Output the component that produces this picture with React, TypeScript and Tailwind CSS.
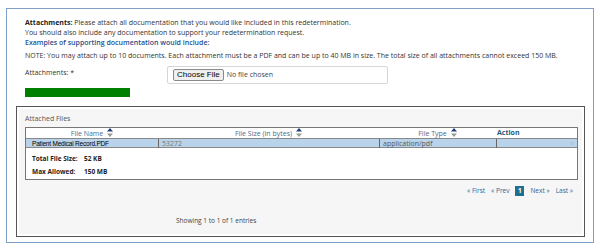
import React from 'react';

function SortIcon() {
  return (
    <svg width="6" height="9" viewBox="0 0 6 9" className="inline-block ml-[4px] align-[-1px]">
      <path d="M3 0 L6 3.5 L0 3.5 Z" fill="#1f3f7a" />
      <path d="M0 5.5 L6 5.5 L3 9 Z" fill="#9a9a9a" />
    </svg>
  );
}

export default function App() {
  return (
    <div className="w-[600px] h-[250px] bg-white pt-[8px] pl-[6px] font-['Open_Sans',sans-serif] text-[7px] text-[#333]">
      <div className="w-[588px] h-[235px] border border-[#7e9fc6] pt-[9px]">
        {/* Instructions */}
        <div className="pl-[18px] leading-[10px]">
          <div>
            <span className="font-bold text-[#222]">Attachments:</span> Please attach all documentation that you would like included in this redetermination.
          </div>
          <div>You should also include any documentation to support your redetermination request.</div>
          <div className="font-semibold text-[#1f4e8c]">Examples of supporting documentation would include:</div>
          <div className="mt-[3px]">
            NOTE: You may attach up to 10 documents. Each attachment must be a PDF and can be up to 40 MB in size. The total size of all attachments cannot exceed 150 MB.
          </div>
        </div>

        {/* File chooser */}
        <div className="pl-[18px] mt-[5px] flex items-start">
          <div className="w-[142px] pt-[2px] leading-[10px]">Attachments: *</div>
          <div className="w-[221px] h-[18px] border border-[#d6d6d6] rounded-[2px] flex items-center pl-[5px] gap-[3px]">
            <span className="h-[12px] px-[3px] border border-[#8a8a8a] rounded-[2px] bg-[#efefef] text-[8px] leading-[10px] text-black font-['Liberation_Sans',sans-serif]">
              Choose File
            </span>
            <span className="text-[7px] text-[#444]">No file chosen</span>
          </div>
        </div>

        {/* Progress bar */}
        <div className="ml-[18px] mt-[4px] w-[105px] h-[9px] bg-[#008000]" />

        {/* Attached files panel */}
        <div className="ml-[9px] mt-[9px] w-[569px] h-[131px] border border-[#555] p-[2px]">
          <div className="bg-[#f6f6f6] h-full px-[6px] pt-[5px]">
            <div className="text-[#555] leading-[10px]">Attached Files</div>
            <div className="mt-[3px] w-[553px] border border-[#777] bg-white">
              <div className="grid grid-cols-[132px_221px_117px_1fr] h-[10px] leading-[10px] text-[#4a6c92]">
                <div className="text-center">
                  File Name<SortIcon />
                </div>
                <div className="text-center">
                  File Size (in bytes)<SortIcon />
                </div>
                <div className="text-center">
                  File Type<SortIcon />
                </div>
                <div className="pl-[1px] font-bold text-[#1f5a78]">Action</div>
              </div>
              <div className="grid grid-cols-[132px_221px_117px_1fr] h-[9px] leading-[9px] bg-[#b9d3ea] border-t border-[#888]">
                <div className="pl-[6px] text-black font-['Liberation_Sans',sans-serif] text-[6.5px] tracking-[-0.2px]">
                  Patient Medical Record.PDF
                </div>
                <div className="pl-[3px] border-l border-[#666] text-[#777]">53272</div>
                <div className="pl-[3px] border-l border-[#666] text-[#555]">application/pdf</div>
                <div className="border-l border-[#666] text-right pr-[4px] text-[#aaa] text-[5px]">v</div>
              </div>
              <div className="border-t border-[#888] px-[6px] pt-[4px] pb-[1px] font-bold text-[#222] text-[6.5px] leading-[13px] whitespace-nowrap">
                <div>
                  <span className="inline-block w-[52px]">Total File Size:</span>52 KB
                </div>
                <div>
                  <span className="inline-block w-[52px]">Max Allowed:</span>150 MB
                </div>
              </div>
            </div>

            {/* Pagination */}
            <div className="mt-[6px] flex justify-end items-center gap-[6px] pr-[3px] text-[#2a6496] text-[6.5px] leading-[10px]">
              <span>« First</span>
              <span>« Prev</span>
              <span className="bg-[#1f6f8f] text-white font-bold w-[9px] h-[10px] flex items-center justify-center">1</span>
              <span>Next »</span>
              <span>Last »</span>
            </div>

            <div className="mt-[20px] pl-[151px] text-[#444] text-[6.5px] leading-[10px]">Showing 1 to 1 of 1 entries</div>
          </div>
        </div>
      </div>
    </div>
  );
}
